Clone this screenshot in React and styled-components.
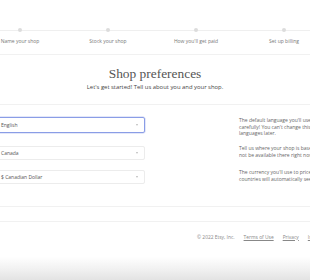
import React from 'react';
import styled, { createGlobalStyle } from 'styled-components';

const GlobalStyle = createGlobalStyle`
  html, body {
    margin: 0;
    padding: 0;
    background: #fff;
  }
  body {
    width: 310px;
    height: 280px;
    overflow: hidden;
    font-family: 'Open Sans', 'Liberation Sans', sans-serif;
  }
`;

const Page = styled.div`
  width: 310px;
  height: 280px;
  display: flex;
  flex-direction: column;
  overflow: hidden;
`;

const Stepper = styled.div`
  height: 55px;
  padding-top: 28px;
  box-sizing: border-box;
  border-bottom: 1px solid #f1f1f1;
`;

const StepList = styled.ol`
  list-style: none;
  margin: 0 0 0 -24px;
  padding: 0;
  display: grid;
  grid-template-columns: repeat(4, 88px);
  position: relative;

  &::before {
    content: '';
    position: absolute;
    left: 0;
    right: -40px;
    top: 2px;
    height: 1px;
    background: #efefef;
  }
`;

const Step = styled.li`
  display: flex;
  flex-direction: column;
  align-items: center;
  position: relative;
`;

const Dot = styled.span`
  width: 4px;
  height: 4px;
  border-radius: 50%;
  background: #dcdcdc;
`;

const StepLabel = styled.span`
  margin-top: 6px;
  font-size: 5px;
  line-height: 7px;
  color: #777;
  white-space: nowrap;
`;

const Header = styled.header`
  height: 50px;
  box-sizing: border-box;
  padding-top: 11px;
  border-bottom: 1px solid #f1f1f1;
  display: flex;
  flex-direction: column;
  align-items: center;
`;

const Title = styled.h1`
  margin: 0;
  font-family: 'Liberation Serif', serif;
  font-weight: 400;
  font-size: 13.4px;
  line-height: 16px;
  color: #555;
`;

const Subtitle = styled.p`
  margin: 2px 0 0;
  font-size: 5.9px;
  line-height: 7px;
  color: #444;
`;

const Form = styled.div`
  padding-top: 12px;
  margin-left: -2px;
  display: flex;
  flex-direction: column;
`;

const Row = styled.div`
  display: grid;
  grid-template-columns: 147px 200px;
  column-gap: 94px;
  align-items: start;
  height: ${p => p.$h}px;
`;

const Select = styled.div`
  height: ${p => (p.$focus ? 16 : 14)}px;
  box-sizing: border-box;
  border: ${p => (p.$focus ? '1.5px solid #8a9de6' : '1px solid #ececec')};
  border-radius: 2px;
  box-shadow: ${p => (p.$focus ? '0 0 0 0.5px #c7d0f3' : 'none')};
  display: flex;
  align-items: center;
  justify-content: space-between;
  padding: 0 6px 0 2px;
  font-size: 5px;
  color: #555;
`;

const Chevron = styled.span`
  width: 0;
  height: 0;
  border-left: 1.5px solid transparent;
  border-right: 1.5px solid transparent;
  border-top: 2px solid #bbb;
`;

const Help = styled.p`
  margin: ${p => p.$offset}px 0 0;
  font-size: 5px;
  line-height: 6.5px;
  color: #666;
  white-space: nowrap;
`;

const Divider = styled.div`
  height: 14px;
  border-top: 1px solid #f1f1f1;
  margin-top: 21px;
`;

const Footer = styled.footer`
  height: 30px;
  border-top: 1px solid #f1f1f1;
  box-sizing: border-box;
  display: flex;
  align-items: center;
  gap: 9px;
  padding-left: 197px;
  font-size: 4.9px;
  color: #888;
  white-space: nowrap;
`;

const FootLink = styled.a`
  color: #888;
  text-decoration: underline;
`;

const Shade = styled.div`
  flex: 1;
  background: linear-gradient(to bottom, #ffffff 0%, #ffffff 20%, #f0f0f0 65%, #e3e3e3 100%);
`;

const steps = ['Name your shop', 'Stock your shop', "How you'll get paid", 'Set up billing'];

const rows = [
  {
    value: 'English',
    focus: true,
    h: 29,
    offset: 0,
    help: [
      "The default language you'll use to describe your items. Choose",
      "carefully! You can't change this once you've set it, but you can add more",
      'languages later.',
    ],
  },
  {
    value: 'Canada',
    h: 24,
    offset: -1,
    help: [
      "Tell us where your shop is based. If you don't see your country, Etsy Payments may",
      'not be available there right now, but you can still sell on Etsy.',
    ],
  },
  {
    value: '$ Canadian Dollar',
    h: 15,
    offset: -1,
    help: [
      "The currency you'll use to price your items. Shoppers in other",
      'countries will automatically see prices in their local currency.',
    ],
  },
];

const App = () => (
  <>
    <GlobalStyle />
    <Page>
      <Stepper>
        <StepList>
          {steps.map(s => (
            <Step key={s}>
              <Dot />
              <StepLabel>{s}</StepLabel>
            </Step>
          ))}
        </StepList>
      </Stepper>
      <Header>
        <Title>Shop preferences</Title>
        <Subtitle>Let's get started! Tell us about you and your shop.</Subtitle>
      </Header>
      <Form>
        {rows.map(r => (
          <Row key={r.value} $h={r.h}>
            <Select $focus={r.focus}>
              {r.value}
              <Chevron />
            </Select>
            <Help $offset={r.offset}>
              {r.help.map((line, i) => (
                <React.Fragment key={i}>
                  {line}
                  <br />
                </React.Fragment>
              ))}
            </Help>
          </Row>
        ))}
      </Form>
      <Divider />
      <Footer>
        <span>© 2022 Etsy, Inc.</span>
        <FootLink>Terms of Use</FootLink>
        <FootLink>Privacy</FootLink>
        <FootLink>Interest-based ads</FootLink>
      </Footer>
      <Shade />
    </Page>
  </>
);

export default App;
